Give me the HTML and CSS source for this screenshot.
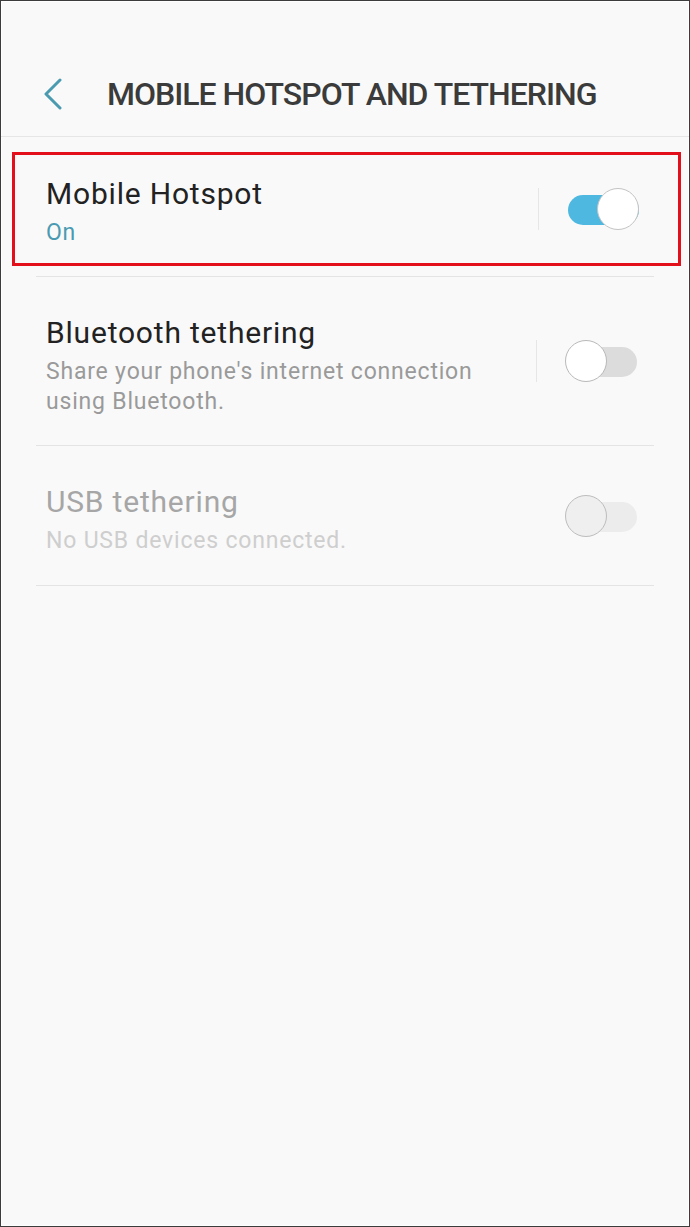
FILE: index.html
```html
<!DOCTYPE html>
<html>
<head>
<meta charset="utf-8">
<link rel="stylesheet" href="styles.css">
</head>
<body>
<div class="screen">
  <header class="header">
    <svg class="back" width="22" height="32" viewBox="0 0 22 32"><path d="M18 2 L4 16 L18 30" fill="none" stroke="#4b9bb0" stroke-width="3" stroke-linecap="round" stroke-linejoin="round"/></svg>
    <h1 class="title">MOBILE HOTSPOT AND TETHERING</h1>
  </header>

  <div class="highlight">
    <div class="row row-first">
      <div class="text">
        <div class="name">Mobile Hotspot</div>
        <div class="sub sub-on">On</div>
      </div>
      <div class="divider"></div>
      <div class="toggle on"><span class="track"></span><span class="thumb"></span></div>
    </div>
  </div>

  <div class="list">
    <div class="sep"></div>
    <div class="row row-bt">
      <div class="text">
        <div class="name">Bluetooth tethering</div>
        <div class="sub">Share your phone's internet connection<br>using Bluetooth.</div>
      </div>
      <div class="divider"></div>
      <div class="toggle off"><span class="track"></span><span class="thumb"></span></div>
    </div>
    <div class="sep"></div>
    <div class="row row-usb disabled">
      <div class="text">
        <div class="name">USB tethering</div>
        <div class="sub">No USB devices connected.</div>
      </div>
      <div class="toggle off dis"><span class="track"></span><span class="thumb"></span></div>
    </div>
    <div class="sep"></div>
  </div>
</div>
</body>
</html>
```

FILE: styles.css
```css
* { box-sizing: border-box; }
html, body { margin: 0; padding: 0; }
body {
  background: #f9f9f9;
  font-family: Roboto, "Noto Sans", sans-serif;
}
.screen {
  width: 690px;
  height: 1227px;
  border: 1px solid #3c3c3c;
  box-shadow: inset 0 0 0 1px #ffffff;
  background: #f9f9f9;
  overflow: hidden;
}
.header {
  height: 136px;
  border-bottom: 1px solid #e6e6e6;
  display: flex;
  align-items: center;
  padding-left: 41px;
  padding-top: 50px;
}
.back { flex: none; display: block; }
.title {
  margin: 0 0 0 43px;
  font-size: 32px;
  font-weight: 500;
  color: #3b3b3b;
  letter-spacing: -1px;
}
.highlight {
  margin: 15px 8px 0 11px;
  border: 3px solid #e3101b;
  height: 114px;
}
.row {
  display: flex;
  align-items: center;
}
.row-first {
  height: 108px;
  padding: 3px 39px 0 31px;
}
.list {
  margin: 10px 35px 0 35px;
}
.sep { height: 1px; background: #e4e4e4; }
.row-bt { height: 168px; padding: 6px 17px 0 10px; }
.row-usb { height: 139px; padding: 6px 17px 0 10px; }
.row-bt .toggle, .row-bt .divider, .row-usb .toggle { margin-top: -6px; }
.row-first .toggle, .row-first .divider { margin-top: -3px; }
.text { flex: 1; }
.name {
  font-size: 30px;
  line-height: 42px;
  letter-spacing: 0.8px;
  color: #222;
}
.sub {
  font-size: 23px;
  line-height: 30px;
  letter-spacing: 0.8px;
  color: #9a9a9a;
  margin-top: 3px;
}
.sub-on { color: #4a9bb2; }
.disabled .name { color: #a6a6a6; }
.disabled .sub { color: #cecece; }
.divider {
  width: 1px;
  height: 42px;
  background: #e6e6e6;
  margin-right: 28px;
}
.toggle {
  position: relative;
  width: 72px;
  height: 44px;
  flex: none;
}
.disabled .toggle { margin-left: 29px; }
.track {
  position: absolute;
  left: 1px;
  right: 0;
  top: 8px;
  height: 30px;
  border-radius: 15px;
  background: #dcdcdc;
}
.toggle.on .track { background: #4fb8e1; }
.toggle.dis .track { background: #ececec; }
.thumb {
  position: absolute;
  top: 1px;
  width: 42px;
  height: 42px;
  border-radius: 50%;
  background: #fff;
  border: 1.5px solid #b9b9b9;
}
.toggle.on .thumb { right: 0; border-color: #c4c4c4; }
.toggle.off .thumb { left: 0; }
.toggle.dis .thumb { background: #efefef; border-color: #bdbdbd; }
```
